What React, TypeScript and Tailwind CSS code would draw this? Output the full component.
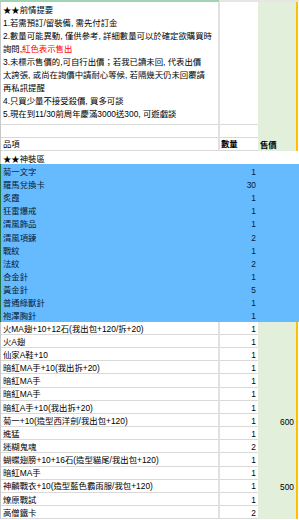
import React from "react";

type Item = { name: string; qty: string; price?: string };

// 神裝區 (藍底)
const blueItems: Item[] = [
  { name: "菊一文字", qty: "1" },
  { name: "羅馬兌換卡", qty: "30" },
  { name: "炙霞", qty: "1" },
  { name: "狂雷爆戒", qty: "1" },
  { name: "清風飾品", qty: "1" },
  { name: "清風項鍊", qty: "2" },
  { name: "戰紋", qty: "1" },
  { name: "法紋", qty: "2" },
  { name: "合金針", qty: "1" },
  { name: "黃金針", qty: "5" },
  { name: "普通綠獸針", qty: "1" },
  { name: "袍澤胸針", qty: "1" },
];

const whiteItems: Item[] = [
  { name: "火MA翅+10+12石(我出包+120/拆+20)", qty: "1" },
  { name: "火A翅", qty: "1" },
  { name: "仙家A鞋+10", qty: "1" },
  { name: "暗紅MA手+10(我出拆+20)", qty: "1" },
  { name: "暗紅MA手", qty: "1" },
  { name: "暗紅MA手", qty: "1" },
  { name: "暗紅A手+10(我出拆+20)", qty: "1" },
  { name: "菊一+10(造型西洋劍/我出包+120)", qty: "1", price: "600" },
  { name: "進猛", qty: "1" },
  { name: "迷糊鬼魂", qty: "2" },
  { name: "蝴蝶翅膀+10+16石(造型貓尾/我出包+120)", qty: "1" },
  { name: "暗紅MA手", qty: "1" },
  { name: "神麟戰衣+10(造型藍色霸雨服/我包+120)", qty: "1", price: "500" },
  { name: "燎原戰試", qty: "1" },
  { name: "高僧鐵卡", qty: "2" },
];

const notes = [
  "1.若需預訂/留裝備, 需先付訂金",
  "2.數量可能異動, 僅供參考, 詳細數量可以於確定欲購買時",
];

const BlueRow = ({ item }: { item: Item }) => (
  <div className="flex h-[13.17px] bg-[#66bbff] text-[#0b1a33]">
    <div className="w-px bg-[#217346]" />
    <div className="w-[217px] pl-[2px] flex items-end pb-[1px] leading-none whitespace-nowrap">
      {item.name}
    </div>
    <div className="w-[40px] pr-[2px] flex items-end justify-end pb-[1px] leading-none">
      {item.qty}
    </div>
    <div className="flex-1" />
  </div>
);

const WhiteRow = ({ item }: { item: Item }) => (
  <div className="flex h-[13.17px]">
    <div className="w-px bg-[#c8c8c8]" />
    <div className="w-[217px] pl-[2px] border-b border-[#d9d9d9] flex items-end pb-[1px] leading-none whitespace-nowrap">
      {item.name}
    </div>
    <div className="w-[2px] bg-[#e1e1e1]" />
    <div className="w-[38px] pr-[2px] border-b border-[#d9d9d9] flex items-end justify-end pb-[1px] leading-none">
      {item.qty}
    </div>
    <div className="w-[38px] pr-[2px] bg-[#e2efda] flex items-end justify-end pb-[1px] leading-none">
      {item.price}
    </div>
    <div className="w-[2px] bg-[#ffc000]" />
    <div className="flex-1 bg-white" />
  </div>
);

export default function App() {
  return (
    <div className="w-[299px] h-[520px] overflow-hidden bg-white text-black text-[8.4px] font-['Liberation_Sans','Noto_Sans_CJK_TC',sans-serif]">
      {/* 欄標題的底邊 */}
      <div className="flex h-[2px]">
        <div className="w-[219px] bg-[#9fd3b3]" />
        <div className="flex-1 bg-[#e6e6e6]" />
      </div>

      {/* 前情提要 */}
      <div className="flex h-[122.5px]">
        <div className="w-px bg-[#c8c8c8]" />
        <div className="w-[217px] pl-[2px] pt-[1.5px] leading-[13px] border-b border-[#d9d9d9] whitespace-nowrap">
          <div>★★前情提要</div>
          {notes.map((n) => (
            <div key={n}>{n}</div>
          ))}
          <div>
            詢問,<span className="text-[#ff0000]">紅色表示售出</span>
          </div>
          <div>3.未標示售價的,可自行出價；若我已讀未回, 代表出價</div>
          <div>太誇張, 或尚在詢價中請耐心等候, 若隔幾天仍未回覆請</div>
          <div>再私訊提醒</div>
          <div>4.只買少量不接受殺價, 買多可談</div>
          <div>5.現在到11/30前周年慶滿3000送300, 可遊戲談</div>
        </div>
        <div className="w-[2px] bg-[#e1e1e1]" />
        <div className="w-[38px] border-b border-[#d9d9d9]" />
        <div className="w-[38px] bg-[#e2efda]" />
        <div className="w-[2px] bg-[#ffc000]" />
        <div className="flex-1 bg-white" />
      </div>

      {/* 空白列 */}
      <WhiteRow item={{ name: "", qty: "" }} />

      {/* 表頭 */}
      <div className="flex h-[13.17px]">
        <div className="w-px bg-[#c8c8c8]" />
        <div className="w-[217px] pl-[2px] border-b border-[#d9d9d9] flex items-end pb-[1px] leading-none">
          品項
        </div>
        <div className="w-[2px] bg-[#e1e1e1]" />
        <div className="w-[38px] pl-px border-b border-[#d9d9d9] flex items-end pb-[1px] leading-none font-bold">
          數量
        </div>
        <div className="w-[38px] pl-[2px] bg-[#e2efda] flex items-end pb-[1px] leading-none font-bold">
          售價
        </div>
        <div className="w-[2px] bg-[#ffc000]" />
        <div className="flex-1 bg-white" />
      </div>

      {/* 區段標題 */}
      <div className="flex h-[13.17px]">
        <div className="w-px bg-[#c8c8c8]" />
        <div className="flex-1 pl-[2px] flex items-end pb-[1px] leading-none">★★神裝區</div>
      </div>

      {blueItems.map((it, i) => (
        <BlueRow key={i} item={it} />
      ))}
      {whiteItems.map((it, i) => (
        <WhiteRow key={i} item={it} />
      ))}
    </div>
  );
}
